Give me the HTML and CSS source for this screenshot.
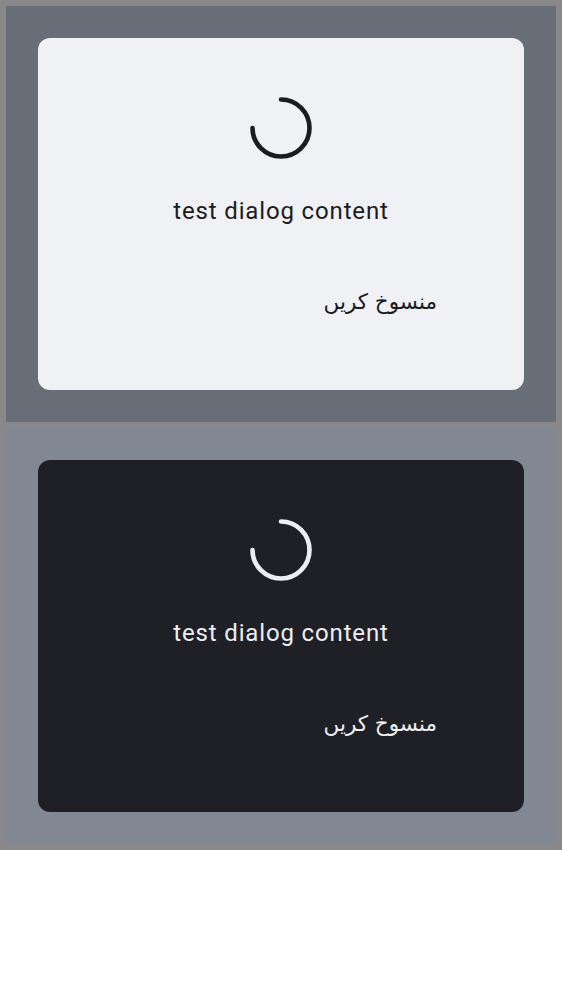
FILE: index.html
```html
<!DOCTYPE html>
<html lang="en">
<head>
<meta charset="utf-8">
<link rel="stylesheet" href="styles.css">
</head>
<body>
<div class="frame">
  <section class="panel panel-light">
    <div class="card card-light">
      <svg class="spinner" width="64" height="64" viewBox="0 0 64 64">
        <path d="M32 3.5 A28.5 28.5 0 1 1 3.5 32" fill="none" stroke="currentColor" stroke-width="4.6" stroke-linecap="round"/>
      </svg>
      <p class="content">test dialog content</p>
      <div class="actions">
        <span class="btn" dir="rtl" lang="ur">منسوخ کریں</span>
      </div>
    </div>
  </section>
  <section class="panel panel-dark">
    <div class="card card-dark">
      <svg class="spinner" width="64" height="64" viewBox="0 0 64 64">
        <path d="M32 3.5 A28.5 28.5 0 1 1 3.5 32" fill="none" stroke="currentColor" stroke-width="4.6" stroke-linecap="round"/>
      </svg>
      <p class="content">test dialog content</p>
      <div class="actions">
        <span class="btn" dir="rtl" lang="ur">منسوخ کریں</span>
      </div>
    </div>
  </section>
</div>
</body>
</html>
```
FILE: styles.css
```css
html, body {
  margin: 0;
  padding: 0;
  background: #ffffff;
}
body {
  font-family: Roboto, "Noto Sans", sans-serif;
}
.frame {
  width: 562px;
  background: #888888;
  padding: 6px;
  box-sizing: border-box;
  display: flex;
  flex-direction: column;
  gap: 6px;
}
.panel {
  height: 416px;
  padding: 32px;
  box-sizing: border-box;
}
.panel-light { background: #676e78; }
.panel-dark { background: #828893; }
.card {
  height: 352px;
  border-radius: 12px;
  box-sizing: border-box;
  padding-top: 58px;
  display: flex;
  flex-direction: column;
  align-items: center;
}
.card-light { background: #f0f1f5; color: #1b1c20; }
.card-dark { background: #1f2025; color: #eceef3; }
.spinner {
  display: block;
}
.content {
  margin: 37px 0 0;
  font-size: 24px;
  line-height: 28px;
  letter-spacing: 0.85px;
}
.actions {
  align-self: stretch;
  display: flex;
  justify-content: flex-end;
  padding-right: 87px;
  margin-top: 62px;
}
.btn {
  font-family: "DejaVu Sans", "Noto Sans", sans-serif;
  font-size: 21.5px;
  line-height: 30px;
}
```
